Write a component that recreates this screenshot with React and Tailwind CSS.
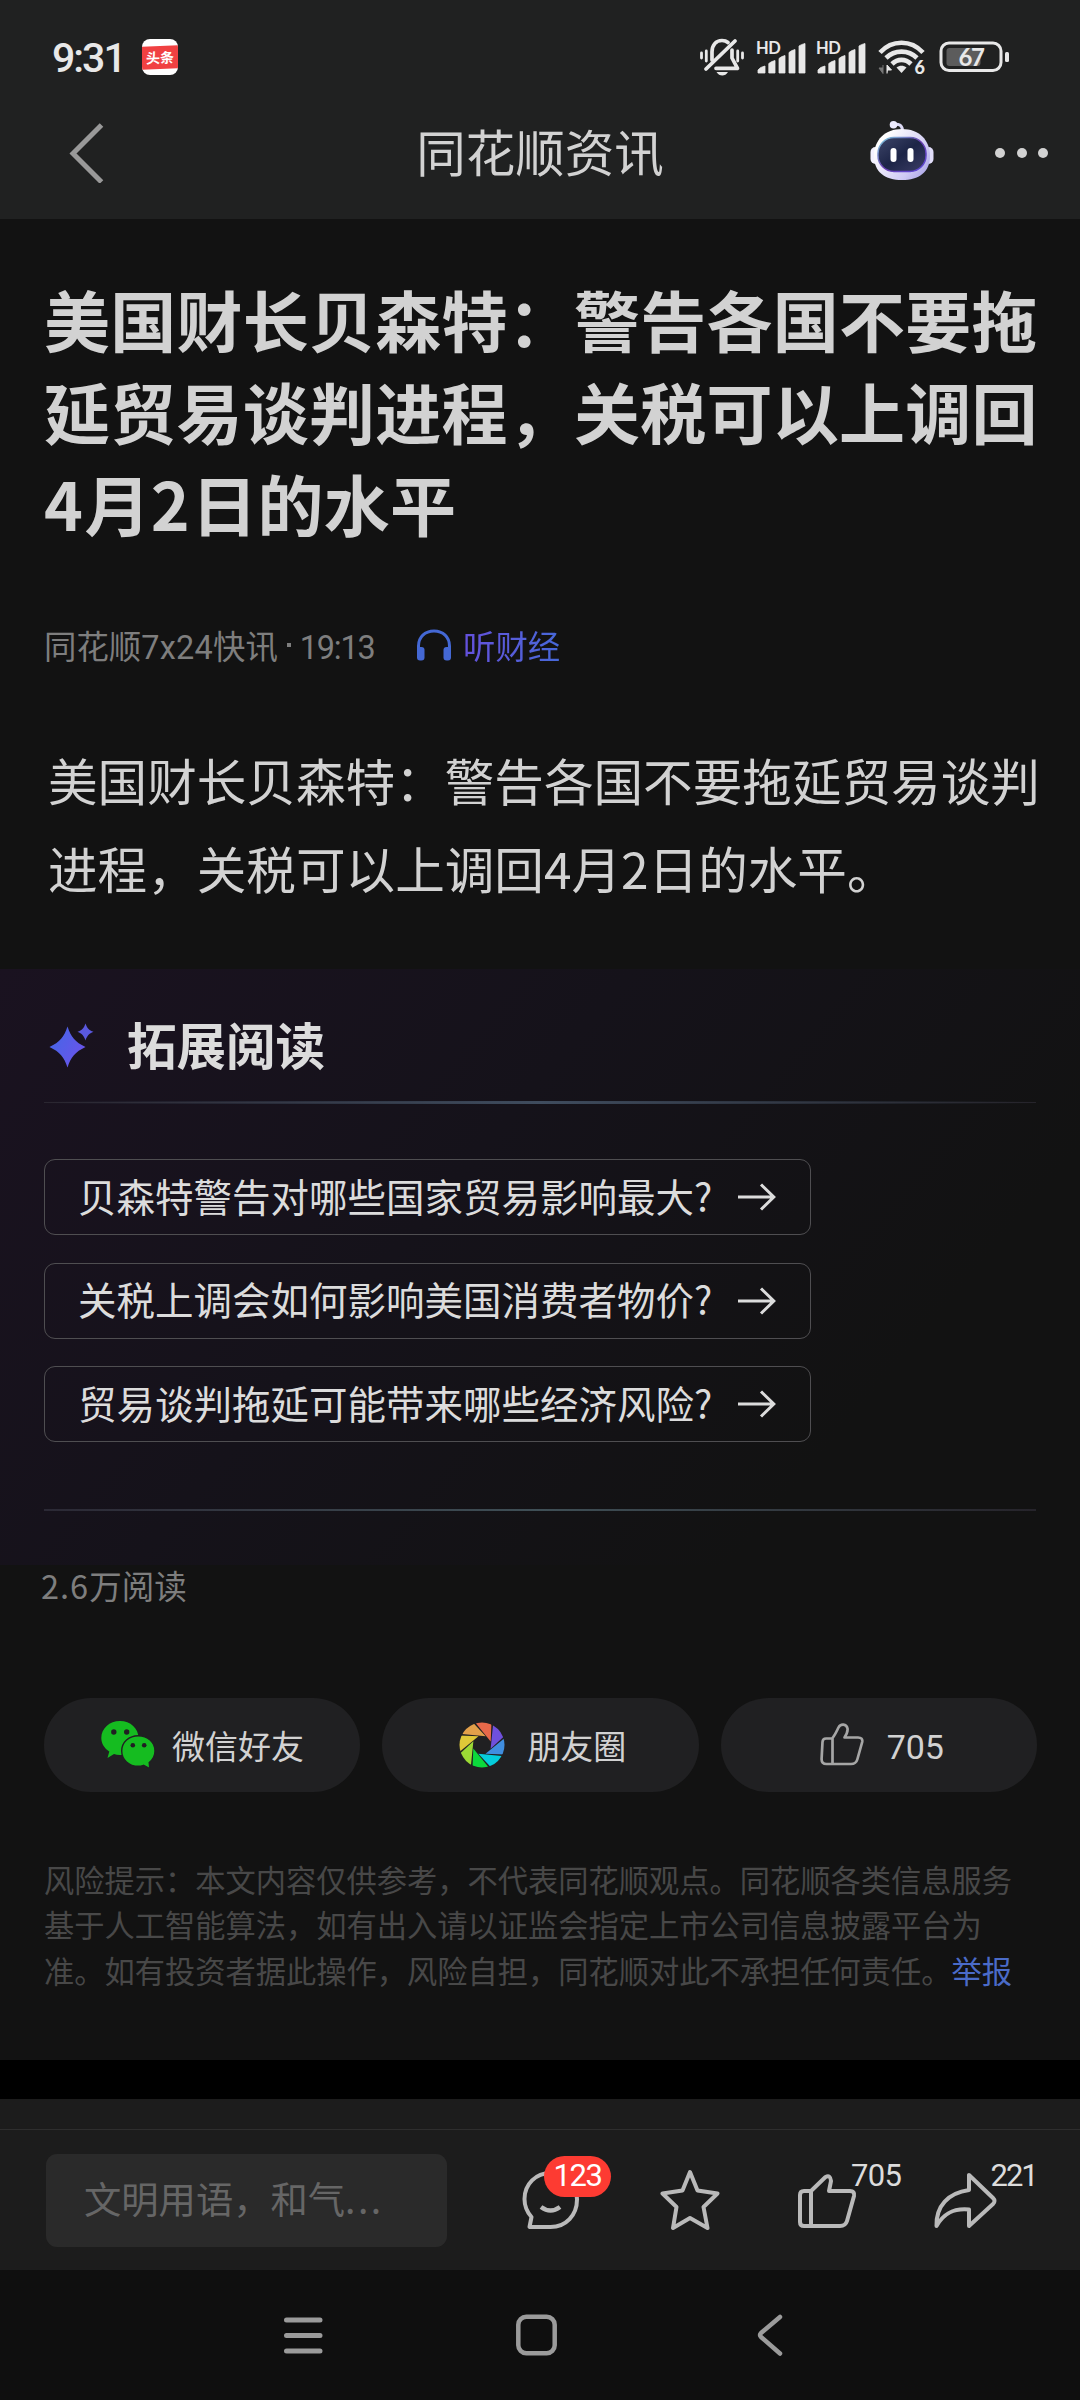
import React from "react";

const questions = [
  "贝森特警告对哪些国家贸易影响最大?",
  "关税上调会如何影响美国消费者物价?",
  "贸易谈判拖延可能带来哪些经济风险?",
];

const disclaimer = [
  "风险提示：本文内容仅供参考，不代表同花顺观点。同花顺各类信息服务",
  "基于人工智能算法，如有出入请以证监会指定上市公司信息披露平台为",
  "准。如有投资者据此操作，风险自担，同花顺对此不承担任何责任。",
];

const MuteIcon = () => (
  <svg width="44" height="38" viewBox="0 0 44 38" fill="none" stroke="#e8e8e8" strokeLinecap="round">
    <path d="M1.5 15v5M6.3 13v10M37.7 13v10M42.5 15v5" strokeWidth="2.8" />
    <path d="M12 22V14C12 7 16 2.5 22 2.5C24.5 2.5 26.5 3.2 28 4.5M32 12V20L37.5 30.3H16" strokeWidth="3.7" strokeLinejoin="round" />
    <path d="M35 3L6 31" strokeWidth="3.8" />
    <path d="M16.5 34H28C26.5 36.5 24.5 37.5 22.3 37.5C20 37.5 18 36.5 16.5 34Z" fill="#e8e8e8" stroke="none" />
  </svg>
);

const SignalIcon = () => (
  <div className="relative w-[50px] h-[34px]">
    <svg width="50" height="34" viewBox="0 0 50 34" fill="#e8e8e8">
      <path d="M2 33V30Q4 27 9 26V33ZM12.8 33V23.5Q15 21.5 19 20.5V33ZM23 33V18.5Q25 16.5 29 15.5V33ZM33 33V12.5Q35 10.5 39 9.5V33ZM43 33V6Q45 4.5 49 3.5V33Z" stroke="#e8e8e8" strokeWidth="0.8" strokeLinejoin="round" />
    </svg>
    <span className="absolute left-0 -top-[3px] text-[16.5px] leading-[22px] font-bold tracking-[-0.5px] text-[#e8e8e8] font-['Lato',sans-serif]">HD</span>
  </div>
);

const WifiIcon = () => (
  <div className="relative w-12 h-9">
    <svg width="48" height="36" viewBox="0 0 48 36" fill="none" stroke="#e8e8e8">
      <path d="M2 13.5C14 0.5 33 0.5 45 13.5" strokeWidth="4.6" />
      <path d="M8 19C16.5 10.5 30.5 10.5 39 19" strokeWidth="4.6" />
      <path d="M14 25C19.5 19.5 27.5 19.5 33 25" strokeWidth="4.6" />
      <path d="M18.5 28.5C21.5 26 25.5 26 28.5 28.5L23.5 34Z" fill="#e8e8e8" stroke="none" />
      <path d="M5 26V34.5L1 29H5" fill="#777" stroke="#777" />
      <path d="M9 34.5V26L13.5 31H10" fill="#e8e8e8" stroke="#e8e8e8" />
    </svg>
    <span className="absolute left-[36.5px] top-[17px] text-[18px] leading-[22px] font-black text-[#e8e8e8] font-['Lato',sans-serif]">6</span>
  </div>
);

const BatteryIcon = () => (
  <div className="relative w-[71px] h-8">
    <svg width="71" height="32" viewBox="0 0 71 32" fill="none">
      <rect x="2" y="2" width="60" height="27.5" rx="8" stroke="#e8e8e8" strokeWidth="3" />
      <rect x="7.5" y="7" width="34" height="18" rx="3" fill="#5c5c5c" />
      <rect x="66" y="11" width="4" height="10" rx="1.5" fill="#e8e8e8" />
    </svg>
    <span className="absolute left-0 top-0 w-16 text-center text-[24px] leading-[32px] font-bold tracking-[-1.5px] text-[#e8e8e8] font-['Lato',sans-serif]">67</span>
  </div>
);

const RobotIcon = () => (
  <svg width="64" height="61" viewBox="0 0 64 61">
    <defs>
      <linearGradient id="shell" x1="0" y1="0" x2="1" y2="0.7">
        <stop offset="0.2" stopColor="#ffffff" />
        <stop offset="0.8" stopColor="#cfc9f4" />
        <stop offset="1" stopColor="#b3aeea" />
      </linearGradient>
      <linearGradient id="visor" x1="0" y1="0" x2="1" y2="1">
        <stop offset="0" stopColor="#3d4569" />
        <stop offset="0.5" stopColor="#1d2547" />
        <stop offset="1" stopColor="#3c3d66" />
      </linearGradient>
      <linearGradient id="rim" x1="0" y1="0" x2="1" y2="1">
        <stop offset="0" stopColor="#7fd3e0" />
        <stop offset="0.5" stopColor="#6a3fb0" />
        <stop offset="1" stopColor="#5a48d8" />
      </linearGradient>
    </defs>
    <path d="M23 4.5C29 3.5 32 5 32.5 10" stroke="#dcdaf5" strokeWidth="3" fill="none" />
    <circle cx="23.5" cy="4.8" r="3.8" fill="#eceafd" />
    <rect x="0.5" y="27" width="10" height="17" rx="5" fill="#f3f2ff" />
    <rect x="53.5" y="27" width="10" height="17" rx="5" fill="#e1defa" />
    <path d="M32 9C49 9 60 20 60 36C60 52 49 60 32 60C15 60 4 52 4 36C4 20 15 9 32 9Z" fill="url(#shell)" />
    <rect x="8" y="17.5" width="48" height="34" rx="16" fill="url(#visor)" stroke="url(#rim)" strokeWidth="1.5" />
    <rect x="20.5" y="28" width="6" height="14" rx="3" fill="#fff" />
    <rect x="37.5" y="28" width="6" height="14" rx="3" fill="#fff" />
  </svg>
);

const HeadphoneIcon = () => (
  <svg width="36" height="32" viewBox="0 0 36 32" fill="none">
    <path d="M2.5 26V17C2.5 8 9 2 18 2C27 2 33.5 8 33.5 17V26" stroke="#4468d4" strokeWidth="3" />
    <rect x="1" y="18" width="7.5" height="13.5" rx="3" fill="#4468d4" />
    <rect x="27.5" y="18" width="7.5" height="13.5" rx="3" fill="#4468d4" />
  </svg>
);

const SparkleIcon = () => (
  <svg width="46" height="46" viewBox="0 0 46 46">
    <defs>
      <linearGradient id="spark" x1="0" y1="0" x2="1" y2="0.6">
        <stop offset="0" stopColor="#4068e6" />
        <stop offset="1" stopColor="#6a54ea" />
      </linearGradient>
    </defs>
    <path d="M18.5 3.5C22 14 26 19 36.5 24C26 29 22 34 18.5 44.5C15 34 11 29 0.5 24C11 19 15 14 18.5 3.5Z" fill="url(#spark)" />
    <path d="M36.5 0.5C38 5 40 7.3 44.5 8.8C40 10.5 38 13 36.5 17.5C35 13 33 10.5 28.5 8.8C33 7.3 35 5 36.5 0.5Z" fill="#5a58de" />
  </svg>
);

const ArrowIcon = () => (
  <svg width="38" height="28" viewBox="0 0 38 28" fill="none" stroke="#dcdcdc" strokeWidth="3">
    <path d="M0 14H35.5M23 1.5L35.8 14L23 26.5" />
  </svg>
);

const WechatIcon = () => (
  <svg width="55" height="48" viewBox="0 0 55 48">
    <path d="M19 0C29.5 0 37.5 7.5 37.5 17C37.5 26.5 29.5 34 19 34Q15.5 34 13 33L6.5 37L8.3 30.5C3.5 27.5 0.3 22.5 0.3 17C0.3 7.5 8.5 0 19 0Z" fill="#15bc20" />
    <path d="M37.3 14.7C46.5 14.7 54 21.3 54 30Q54 37 48.2 41.5L48.8 47.5L42.5 44.3Q40 45.3 37.3 45.3C28 45.3 20.7 38.7 20.7 30C20.7 21.3 28 14.7 37.3 14.7Z" fill="#15bc20" stroke="#202022" strokeWidth="1.4" />
    <g fill="#202022">
      <circle cx="12.8" cy="11" r="2.7" />
      <circle cx="25.7" cy="11" r="2.7" />
      <circle cx="31.8" cy="24.3" r="2.3" />
      <circle cx="43.2" cy="24.3" r="2.3" />
    </g>
  </svg>
);

const blades = ["#e8694a", "#6f50dc", "#408ee0", "#05cddc", "#0cd93c", "#9bd935", "#dfc838", "#e2a04a"];

const MomentsIcon = () => (
  <svg width="46" height="46" viewBox="-23 -23 46 46">
    <defs>
      <clipPath id="disc">
        <circle r="22.5" />
      </clipPath>
    </defs>
    <g clipPath="url(#disc)">
      {blades.map((color, i) => (
        <path key={color} d="M-8 -24L9.5 -24L8.7 -3.5Z" fill={color} transform={`rotate(${i * 45})`} />
      ))}
    </g>
  </svg>
);

const SmallThumbIcon = () => (
  <svg width="44" height="44" viewBox="0 0 44 44" fill="none" stroke="#a6a6a6" strokeWidth="2.7" strokeLinejoin="round">
    <path d="M12.5 15.5H6Q2.7 15.5 2.5 19L1.6 36Q1.5 41 6.5 41H31Q36 41 37.3 36.5L42.2 19Q43 14.5 38 14.5H24.5C26.5 11.5 28 8.5 27.5 5.5C26.5 0.5 20.5 0.5 18.5 4.5C16.5 8.5 15 12 12.5 15V41" />
  </svg>
);

const CommentIcon = () => (
  <svg width="58" height="60" viewBox="0 0 58 60" fill="none" stroke="#bababa" strokeWidth="4">
    <path d="M28.5 3C14 3 2.5 14 2.5 29C2.5 36 5 42 9.5 47L7.5 57H28.5C44 57 55 45 55 29.5C55 14 44 3 28.5 3Z" strokeLinejoin="round" />
    <path d="M19 37Q28.5 44 38 37" strokeWidth="4.5" />
  </svg>
);

const StarIcon = () => (
  <svg width="60" height="62" viewBox="0 0 60 62" fill="none" stroke="#bababa" strokeWidth="4" strokeLinejoin="round">
    <path d="M30 3L37.5 21.5L57.5 24.5L43.5 38L47.5 59L30 49L13 59L16.5 38L2.5 24.5L22.5 21.5Z" />
  </svg>
);

const ThumbIcon = () => (
  <svg width="60" height="56" viewBox="0 0 60 56" fill="none" stroke="#bababa" strokeWidth="4" strokeLinejoin="round">
    <path d="M14 18H7Q3 18 3 22V49Q3 53 7 53H43Q48.5 53 50 48L57 23Q58 18 53 18H32L34 8Q33.5 1.5 28.5 4L14 18V53" />
  </svg>
);

const ShareIcon = () => (
  <svg width="64" height="58" viewBox="0 0 64 58" fill="none" stroke="#bababa" strokeWidth="4" strokeLinejoin="round">
    <path d="M35 3V18C14 21 2 34 2.5 54C10 41 20 36 35 37.5V54L59 32Q62 29 59 26Z" />
  </svg>
);

const App = () => {
  return (
    <div className="w-[1080px] h-[2400px] overflow-hidden bg-[#121212] text-[#d2d2d2] font-['Noto_Sans_CJK_SC',sans-serif] whitespace-nowrap">
      {/* Header */}
      <header className="h-[219px] bg-[#202121]">
        <div className="h-[114px] flex items-center pl-[52px] pr-[70px]">
          <span className="w-[90px] mt-[2px] text-[41px] leading-[48px] font-medium tracking-[-2px] text-[#e8e8e8] font-['Roboto',sans-serif]">9:31</span>
          <div className="w-9 h-9 rounded-lg bg-white overflow-hidden flex items-center">
            <div className="w-9 h-[23px] bg-[#f04142] text-white text-[14px] leading-[22px] font-bold text-center -skew-y-2">
              头条
            </div>
          </div>
          <div className="ml-auto flex items-center">
            <MuteIcon />
            <div className="flex gap-[10px] ml-3 mr-3">
              <SignalIcon />
              <SignalIcon />
            </div>
            <WifiIcon />
            <div className="ml-[13px]">
              <BatteryIcon />
            </div>
          </div>
        </div>
        <div className="h-[77px] grid grid-cols-[1fr_auto_1fr] items-center pl-[68px] pr-[32px]">
          <svg width="36" height="60" viewBox="0 0 36 60" fill="none" stroke="#999" strokeWidth="5">
            <path d="M33.5 2L5 30.5L33.5 59" />
          </svg>
          <h1 className="text-[49.5px] leading-[60px] -mt-1 -ml-[36px]">同花顺资讯</h1>
          <div className="flex items-center justify-end gap-[61px]">
            <div className="-mt-1">
              <RobotIcon />
            </div>
            <div className="flex gap-[11.5px]">
              <span className="w-[10px] h-[10px] rounded-full bg-[#d2d2d2]" />
              <span className="w-[10px] h-[10px] rounded-full bg-[#d2d2d2]" />
              <span className="w-[10px] h-[10px] rounded-full bg-[#d2d2d2]" />
            </div>
          </div>
        </div>
      </header>

      {/* Article */}
      <article className="h-[750px] pl-11 pt-[53px]">
        <h2 className="text-[66px] leading-[92px] tracking-[0.25px] font-bold">
          美国财长贝森特：警告各国不要拖
          <br />
          延贸易谈判进程，关税可以上调回
          <br />
          <span className="tracking-[1.5px]">4</span>月<span className="tracking-[1.5px]">2</span>日的水平
        </h2>
        <div className="mt-[73px] h-12 flex items-center text-[32.4px]">
          <div className="text-[#7e7e7e] w-[372px] flex items-center">
            <span>同花顺</span>
            <span className="font-['Roboto',sans-serif] leading-[40px] mt-[6px] tracking-[0.3px]">7x24</span>
            <span>快讯</span>
            <span className="w-[4px] h-[4px] bg-[#7e7e7e] mx-[9px]" />
            <span className="font-['Roboto',sans-serif] leading-[40px] mt-[6px] tracking-[-1.2px]">19:13</span>
          </div>
          <HeadphoneIcon />
          <span className="ml-[11px] bg-linear-to-r from-[#6450dc] to-[#4668d8] bg-clip-text text-transparent">听财经</span>
        </div>
        <p className="mt-[66px] ml-1 text-[49.6px] leading-[88px]">
          美国财长贝森特：警告各国不要拖延贸易谈判
          <br />
          进程，关税可以上调回4月2日的水平。
        </p>
      </article>

      {/* Extended reading */}
      <section className="h-[596px] px-11 pt-[45px] bg-[linear-gradient(130deg,#1a1220_0%,#15121a_40%,#121212_78%)]">
        <div className="h-[60px] flex items-center text-[#dcdcdc]">
          <div className="ml-[5px] mt-[3px]">
            <SparkleIcon />
          </div>
          <h3 className="ml-8 -mt-px text-[49.5px] leading-[60px] font-bold">拓展阅读</h3>
        </div>
        <div className="mt-[27px] h-[3px] flex items-center bg-linear-to-r from-transparent via-[#3f4c5e] to-transparent">
          <div className="h-px w-full bg-linear-to-r from-[#2a2630] via-[#3f4c5e] to-[#26242b]" />
        </div>
        <div className="mt-[55px] flex flex-col items-start gap-[27.5px]">
          {questions.map((q) => (
            <button key={q} className="w-[767px] h-[76px] pl-[33px] flex items-center rounded-[11px] border border-[#4f4e51] text-[38.5px] leading-[56px] text-[#dcdcdc]">
              <span className="w-[660px] text-left -mt-[5px]">{q}</span>
              <ArrowIcon />
            </button>
          ))}
        </div>
        <div className="mt-[67px] h-[2px] bg-linear-to-r from-[#2b2935] via-[#3f4f56] to-[#26242b]" />
      </section>

      {/* Reads and share */}
      <section className="h-[495px] px-11">
        <p className="-ml-[3px] h-11 text-[32.5px] leading-[40px] text-[#7e7e7e]">
          <span className="tracking-[1px]">2.6</span>万阅读
        </p>
        <div className="mt-[89px] -mr-px grid grid-cols-3 gap-[22px] text-[33px] leading-[48px]">
          <button className="h-[94px] rounded-full bg-[#202022] flex items-center pl-[57px]">
            <WechatIcon />
            <span className="ml-[16px] -mt-px">微信好友</span>
          </button>
          <button className="h-[94px] rounded-full bg-[#202022] flex items-center pl-[77px]">
            <MomentsIcon />
            <span className="ml-[22px] -mt-px">朋友圈</span>
          </button>
          <button className="h-[94px] rounded-full bg-[#202022] flex items-center pl-[99px]">
            <SmallThumbIcon />
            <span className="ml-[23px] mt-[3px] text-[34px] font-['Roboto',sans-serif]">705</span>
          </button>
        </div>
        <p className="mt-[64.5px] text-[30.25px] leading-[45.6px] text-[#484848]">
          {disclaimer.map((line, i) => (
            <span key={line}>
              {line}
              {i < 2 && <br />}
            </span>
          ))}
          <span className="text-[#4a6bc8]">举报</span>
        </p>
      </section>

      <div className="h-[39px] bg-black" />

      {/* Comment toolbar */}
      <footer className="h-[171px] bg-[#1c1c1c] pt-[30px]">
        <div className="h-[141px] border-t border-[#2e2e2e] pl-[46px] pt-6 flex items-start">
          <div className="w-[401px] h-[93px] rounded-[11px] bg-[#2a2a2a] pl-[38px] text-[37.3px] leading-[88px] text-[#666]">
            文明用语，和气<span className="tracking-[2.5px]">...</span>
          </div>
          <div className="relative ml-[75px] mt-[16px]">
            <CommentIcon />
            <span className="absolute left-[22px] -top-[14px] w-[67px] h-[41px] rounded-full bg-[#fd3b32] text-white text-[31px] leading-[40px] tracking-[-1.5px] text-center font-['Roboto',sans-serif]">
              123
            </span>
          </div>
          <div className="ml-20 mt-[15px]">
            <StarIcon />
          </div>
          <div className="relative ml-[77px] mt-[19px]">
            <ThumbIcon />
            <span className="absolute left-[54px] -top-[17px] text-[31px] leading-[40px] tracking-[-0.7px] text-[#dcdcdc] font-['Roboto',sans-serif]">705</span>
          </div>
          <div className="relative ml-[77px] mt-[18px]">
            <ShareIcon />
            <span className="absolute left-[56.5px] -top-[16px] text-[31px] leading-[40px] tracking-[-2px] text-[#dcdcdc] font-['Roboto',sans-serif]">221</span>
          </div>
        </div>
      </footer>

      {/* System navigation */}
      <nav className="h-[130px] bg-[#0f0f0f] pl-[283px]">
        <div className="h-[129px] flex items-center">
          <svg width="40" height="40" viewBox="0 0 40 40" stroke="#9b9b9b" strokeWidth="5" strokeLinecap="round">
            <path d="M3.5 5H37M3.5 20.5H37M3.5 36H37" />
          </svg>
          <svg className="ml-[193px]" width="41" height="42" viewBox="0 0 41 42" fill="none" stroke="#9b9b9b" strokeWidth="4.5">
            <rect x="2.3" y="2.8" width="36.4" height="36.4" rx="8" />
          </svg>
          <svg className="ml-[200px]" width="27" height="42" viewBox="0 0 27 42" fill="none" stroke="#9b9b9b" strokeWidth="4.5" strokeLinecap="round" strokeLinejoin="round">
            <path d="M23 3L4 19Q2 21 4 23L23 39.5" />
          </svg>
        </div>
      </nav>
    </div>
  );
};

export default App;
